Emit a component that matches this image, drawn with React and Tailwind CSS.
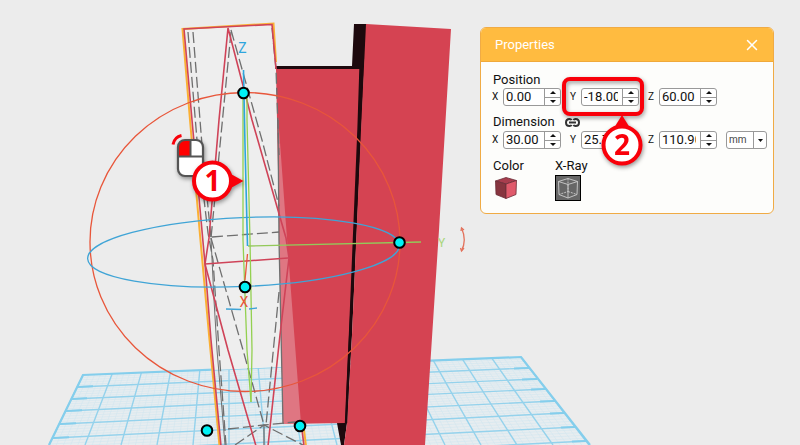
import React, { useState } from 'react';
import { X } from 'lucide-react';

// Build plate corners, back edge first, then the same lines further forward
const LEFT = [[83, 375], [77, 387], [71, 399], [66, 411], [60, 424], [53, 438], [46, 453], [38, 469]];
const RIGHT = [[521, 357], [529, 368], [537, 379], [546, 389], [555, 401], [565, 413], [576, 427], [587, 441]];
const COLUMNS = Array.from({ length: 16 }, (_, i) => i);
const MINOR = [0.2, 0.4, 0.6, 0.8];

const mix = (a, b, t) => a + (b - a) * t;

const BuildPlate = () => (
  <g stroke="#94d2ec" fill="none">
    <polygon points="83,375 521,357 590,445 600,458 44,458" fill="#e7edf0" stroke="none" />
    <g strokeWidth="0.6" opacity="0.25">
      {LEFT.slice(0, -1).map((l, i) =>
        MINOR.map((t) => (
          <line
            key={`${i}-${t}`}
            x1={mix(l[0], LEFT[i + 1][0], t)}
            y1={mix(l[1], LEFT[i + 1][1], t)}
            x2={mix(RIGHT[i][0], RIGHT[i + 1][0], t)}
            y2={mix(RIGHT[i][1], RIGHT[i + 1][1], t)}
          />
        ))
      )}
      {COLUMNS.slice(0, -1).map((i) =>
        MINOR.map((t) => (
          <line key={`${i}-${t}`} x1={83 + 29.2 * (i + t)} y1={375 - 1.2 * (i + t)} x2={49 + 36 * (i + t)} y2="445" />
        ))
      )}
    </g>
    <g strokeWidth="1.4">
      {LEFT.slice(1).map((l, i) => (
        <line key={i} x1={l[0]} y1={l[1]} x2={RIGHT[i + 1][0]} y2={RIGHT[i + 1][1]} />
      ))}
      {COLUMNS.map((i) => (
        <line key={i} x1={83 + 29.2 * i} y1={375 - 1.2 * i} x2={49 + 36 * i} y2="445" />
      ))}
    </g>
    <path d="M49 445 L83 375 L521 357 L590 445" strokeWidth="2.2" stroke="#84ceec" />
    {/* ruler ticks along both sides */}
    <g strokeWidth="2" stroke="#84ceec">
      {LEFT.slice(1, 6).map((l, i) => (
        <line key={i} x1={l[0]} y1={l[1]} x2={l[0] + 16} y2={l[1] - 0.7} />
      ))}
      {RIGHT.slice(1).map((r, i) => (
        <line key={i} x1={r[0]} y1={r[1]} x2={r[0] - 15} y2={r[1] + 0.6} />
      ))}
    </g>
  </g>
);

const HANDLES = [[243.5, 93], [399.5, 242.5], [245, 287], [207, 430.5], [300, 426]];

const Scene = () => (
  <svg
    viewBox="0 0 800 445"
    preserveAspectRatio="xMidYMid slice"
    className="absolute inset-0 h-full w-full"
    role="img"
    aria-label="3D workspace"
  >
    <BuildPlate />

    {/* solid parts */}
    <polygon points="183,29 273,24 277,69 283,367 213,370" fill="#eeeeee" />
    <polygon points="354,24 367,24 364,75 352,335 347,423 344,445 341,445 337,423 345,423 352,69 275,69 275,66 352,66" fill="#1d090d" />
    <polygon points="276,69 360,69 355,220 349,335 345,423 283,424" fill="#d54352" />
    <polygon points="278,115 281,335 283,424 301,424 286,225" fill="#df7682" />
    <polygon points="366,24 451,29 439,230 425,445 344,445 347,423 352,335 361,130" fill="#d54352" />
    <path d="M360.500 69 L358.500 130 L350 335 L346 423" fill="none" stroke="#1d090d" strokeWidth="2.400" />

    {/* hidden edges */}
    <g fill="none" stroke="#6f6f6f" strokeWidth="1.3" strokeDasharray="11 4">
      <path d="M188 32 L197 140 L208 233 L213 260 L219 350 L226 445" />
      <path d="M193 32 L202 145 L211 238" />
      <path d="M231 30 L262 140 L279 206" />
      <path d="M231 32 L211 238" />
      <path d="M212 237 L279 232" />
      <path d="M211 238 L243 350 L264 425" />
      <path d="M279 292 L266 425" />
      <path d="M228 429 L264 425 L295 422" />
      <path d="M235 445 L264 425 L303 445" />
      <path d="M264 425 V445" strokeDasharray="none" />
      <path d="M272 28 L276 69 L279 155" />
      <path d="M211 238 L214 300 L217 350 L225 445" strokeDasharray="none" strokeWidth="1" />
      <path d="M278 120 L279 240 L283 424" strokeDasharray="none" />
    </g>

    {/* selected outline */}
    <path d="M219.500 446 L209.500 340 L200 235 L190 120 L182.500 29 L273.500 23.500 L276 62" fill="none" stroke="#fbb034" strokeWidth="2" />
    <path d="M304 430 L306 446" fill="none" stroke="#fbb034" strokeWidth="2" />
    <g fill="none" stroke="#cf4358" strokeWidth="1.6">
      <path d="M221 446 L211 340 L205 264 L192 120 L184 29 L272 24.500 L276 69" />
      <path d="M205 264 L209 238 L219 120 L228 28 L252 120 L286 238 L289 258 L280 335 L268 446" />
      <path d="M205 264 L288 258" />
      <path d="M205 264 L228 350 L256 446" />
      <path d="M302 430 L304 446" />
    </g>

    {/* rotation gizmo */}
    <g fill="none" strokeWidth="1.3">
      <ellipse cx="245" cy="242" rx="155" ry="149.500" stroke="#e8563a" />
      <ellipse cx="243.500" cy="252" rx="156" ry="34.500" transform="rotate(-2.500 243.500 252)" stroke="#3fa4d6" />
      <path d="M243 98 L243 240 L247 350 L251 402" stroke="#93d050" />
      <path d="M247 98 L247 120 L250 240 L252 350 L251 402" stroke="#93d050" />
      <path d="M248 246 L421 242" stroke="#93c95a" />
      <path d="M243.500 70 L245 145 L247.500 246" stroke="#2ea5dd" strokeWidth="1.6" />
      <path d="M247.500 254 L245 280" stroke="#e8563a" />
      <path d="M226 309 L241 309.500 M249 309 L257 308" stroke="#3fa4d6" />
      <path d="M461.500 228 Q467 240 461.500 251" stroke="#e3725c" />
      <path d="M461 231 L461.500 228 L464 230 M460.500 248 L461.500 251 L464 248" stroke="#e3725c" />
    </g>
    <g fontSize="14" textAnchor="middle" className="font-['Roboto',sans-serif]">
      <text x="242.500" y="53" fill="#2ea5dd">Z</text>
      <text x="244" y="307" fill="#e8563a">X</text>
      <text x="441.500" y="247" fontSize="12" fill="#a9d67b">Y</text>
    </g>
    <g fill="#00f2f5" stroke="#000" strokeWidth="2">
      {HANDLES.map(([cx, cy]) => (
        <circle key={cx} cx={cx} cy={cy} r="5.3" />
      ))}
    </g>

    {/* left mouse button hint */}
    <g className="drop-shadow-[1px_2px_2px_rgba(0,0,0,0.4)]">
      <rect x="178" y="140" width="25" height="36" rx="7" fill="#fff" />
      <path d="M190 140 H185 Q178 140 178 147 V156.500 H190 Z" fill="#f00" />
      <path d="M178 156.500 H203 M190.500 140 V156.500" stroke="#555" strokeWidth="2" />
      <rect x="178" y="140" width="25" height="36" rx="7" fill="none" stroke="#555" strokeWidth="2.2" />
    </g>
    <path d="M173 144.500 Q174.500 137 181.500 135.500" fill="none" stroke="#f9000a" strokeWidth="3" />

    {/* callout 1 */}
    <g className="drop-shadow-[1px_2px_2px_rgba(0,0,0,0.4)]">
      <path d="M229 173 L243.500 181 L229 189 Z" fill="#f9000a" />
      <circle cx="212.500" cy="181" r="18.500" fill="#fff" stroke="#f9000a" strokeWidth="4" />
    </g>
    <text x="212.500" y="191" fontSize="28" fontWeight="700" textAnchor="middle" fill="#f9000a" className="font-['Open_Sans',sans-serif]">
      1
    </text>
  </svg>
);

const Stepper = ({ label, onStep }) => (
  <div className="flex w-4 shrink-0 flex-col divide-y divide-[#999] border-l border-[#999]">
    <button type="button" aria-label={`Increase ${label}`} onClick={() => onStep(1)} className="flex flex-1 items-center justify-center">
      <svg width="6" height="3" viewBox="0 0 6 3"><path d="M0 3 L3 0 L6 3 Z" fill="#111" /></svg>
    </button>
    <button type="button" aria-label={`Decrease ${label}`} onClick={() => onStep(-1)} className="flex flex-1 items-center justify-center">
      <svg width="6" height="3" viewBox="0 0 6 3"><path d="M0 0 L3 3 L6 0 Z" fill="#111" /></svg>
    </button>
  </div>
);

const NumberField = ({ id, axis, initial, children }) => {
  const [value, setValue] = useState(initial);
  const handleStep = (delta) => setValue((prev) => (parseFloat(prev || 0) + delta).toFixed(2));

  return (
    <div className="relative flex items-center">
      <label htmlFor={id} className="w-[11px] text-[10px] leading-4">{axis}</label>
      <div className="flex h-[18px] w-[58px] overflow-hidden rounded-[3px] border border-[#999] bg-white">
        <input
          id={id}
          type="text"
          inputMode="decimal"
          value={value}
          onChange={(e) => setValue(e.target.value)}
          className="min-w-0 flex-1 bg-transparent pr-1 pl-[2px] text-[13px] leading-4 outline-none"
        />
        <Stepper label={id} onStep={handleStep} />
      </div>
      {children}
    </div>
  );
};

const FieldCallout = () => (
  <div className="pointer-events-none absolute -top-[11px] -left-2 z-10 drop-shadow-[1px_2px_2px_rgba(0,0,0,0.4)]">
    <div className="h-[39px] w-[82px] rounded-lg border-4 border-[#f9000a]" />
    <svg width="44" height="52" viewBox="0 0 44 52" className="absolute top-[38px] left-[38px]">
      <path d="M14 13 L22 0 L30 13 Z" fill="#f9000a" />
      <circle cx="22" cy="30" r="18.500" fill="#fff" stroke="#f9000a" strokeWidth="4" />
      <text x="22" y="40" fontSize="28" fontWeight="700" textAnchor="middle" fill="#f9000a" className="font-['Open_Sans',sans-serif]">2</text>
    </svg>
  </div>
);

const LinkIcon = () => (
  <svg width="15" height="9" viewBox="0 0 15 9" fill="none" stroke="#333" strokeWidth="2">
    <path d="M6.500 2.200 Q6 1 4.500 1 Q1 1 1 4.500 Q1 8 4.500 8 Q6 8 6.500 6.800" />
    <path d="M8.500 2.200 Q9 1 10.500 1 Q14 1 14 4.500 Q14 8 10.500 8 Q9 8 8.500 6.800" />
    <path d="M4 4.500 H11" />
  </svg>
);

const ColorCube = () => (
  <svg width="22" height="22" viewBox="0 0 22 22" stroke="#6b2f39" strokeWidth="0.8" strokeLinejoin="round">
    <path d="M0.500 4 L11 0.500 L21.500 3.500 L11 7 Z" fill="#a83e4e" />
    <path d="M0.500 4 L11 7 V21.500 L1 17.500 Z" fill="#87353f" />
    <path d="M11 7 L21.500 3.500 L21 17.500 L11 21.500 Z" fill="#e05a6b" />
  </svg>
);

const XRayCube = () => (
  <svg width="24" height="24" viewBox="0 0 24 24" fill="none" stroke="#ccc" strokeWidth="0.9">
    <path d="M2.500 5.500 L12 2.500 L21.500 5.500 L12 8.500 Z" />
    <path d="M2.500 5.500 L3 18.500 L12 22 L21 18.500 L21.500 5.500 M12 8.500 V22" />
    <path d="M12 2.500 V15.500 L3 18.500 M12 15.500 L21 18.500" strokeDasharray="2 1" />
  </svg>
);

const PropertiesPanel = ({ onClose }) => {
  const [unit, setUnit] = useState('mm');
  const [xray, setXray] = useState(true);

  return (
    <section className="relative w-[294px] rounded-md border border-[#f0ab45] bg-[#fdfdfb] text-[#111]">
      <header className="flex h-[34px] items-center justify-between rounded-t-[5px] border-b border-[#f0a93a] bg-[#ffbb40] pr-3 pl-[14px] text-white">
        <h2 className="text-[13px] leading-4">Properties</h2>
        <button type="button" aria-label="Close" onClick={onClose}>
          <X size={18} strokeWidth={2} />
        </button>
      </header>

      <div className="pt-[10px] pr-[6px] pb-[12px] pl-[11px] text-[13px] leading-4">
        <h3 className="pl-px">Position</h3>
        <div className="flex gap-[9px]">
          <NumberField id="position-x" axis="X" initial="0.00" />
          <NumberField id="position-y" axis="Y" initial="-18.00">
            <FieldCallout />
          </NumberField>
          <NumberField id="position-z" axis="Z" initial="60.00" />
        </div>

        <div className="mt-2 mb-px flex items-center gap-[10px] pl-px">
          <h3>Dimension</h3>
          <button type="button" aria-label="Lock proportions">
            <LinkIcon />
          </button>
        </div>
        <div className="flex gap-[9px]">
          <NumberField id="dimension-x" axis="X" initial="30.00" />
          <NumberField id="dimension-y" axis="Y" initial="25.70" />
          <NumberField id="dimension-z" axis="Z" initial="110.90" />
          <div className="relative h-[18px] w-[41px]">
            <select
              aria-label="Unit"
              value={unit}
              onChange={(e) => setUnit(e.target.value)}
              className="h-full w-full appearance-none rounded-[3px] border border-[#999] bg-white pl-[2px] text-[10px] leading-4 text-[#444]"
            >
              <option>mm</option>
              <option>cm</option>
              <option>in</option>
            </select>
            <span className="pointer-events-none absolute inset-y-0 right-0 flex w-[14px] items-center justify-center border-l border-[#999]">
              <svg width="5" height="3" viewBox="0 0 5 3"><path d="M0 0 H5 L2.500 3 Z" fill="#111" /></svg>
            </span>
          </div>
        </div>

        <div className="mt-[9px] flex pl-px">
          <div className="flex w-[62px] flex-col items-start gap-[2px]">
            <span>Color</span>
            <button type="button" aria-label="Color" className="pt-px pl-[2px]">
              <ColorCube />
            </button>
          </div>
          <div className="flex flex-col items-start gap-px">
            <span>X-Ray</span>
            <button type="button" aria-label="X-Ray" aria-pressed={xray} onClick={() => setXray((prev) => !prev)} className="border border-black bg-[#666]">
              <XRayCube />
            </button>
          </div>
        </div>
      </div>
    </section>
  );
};

export default function App() {
  const [isOpen, setIsOpen] = useState(true);

  return (
    <main className="relative min-h-screen overflow-hidden bg-[#ececec] font-['Roboto',sans-serif]">
      <Scene />
      <div className="flex justify-end pt-[27px] pr-[26px]">
        {isOpen && <PropertiesPanel onClose={() => setIsOpen(false)} />}
      </div>
    </main>
  );
}
